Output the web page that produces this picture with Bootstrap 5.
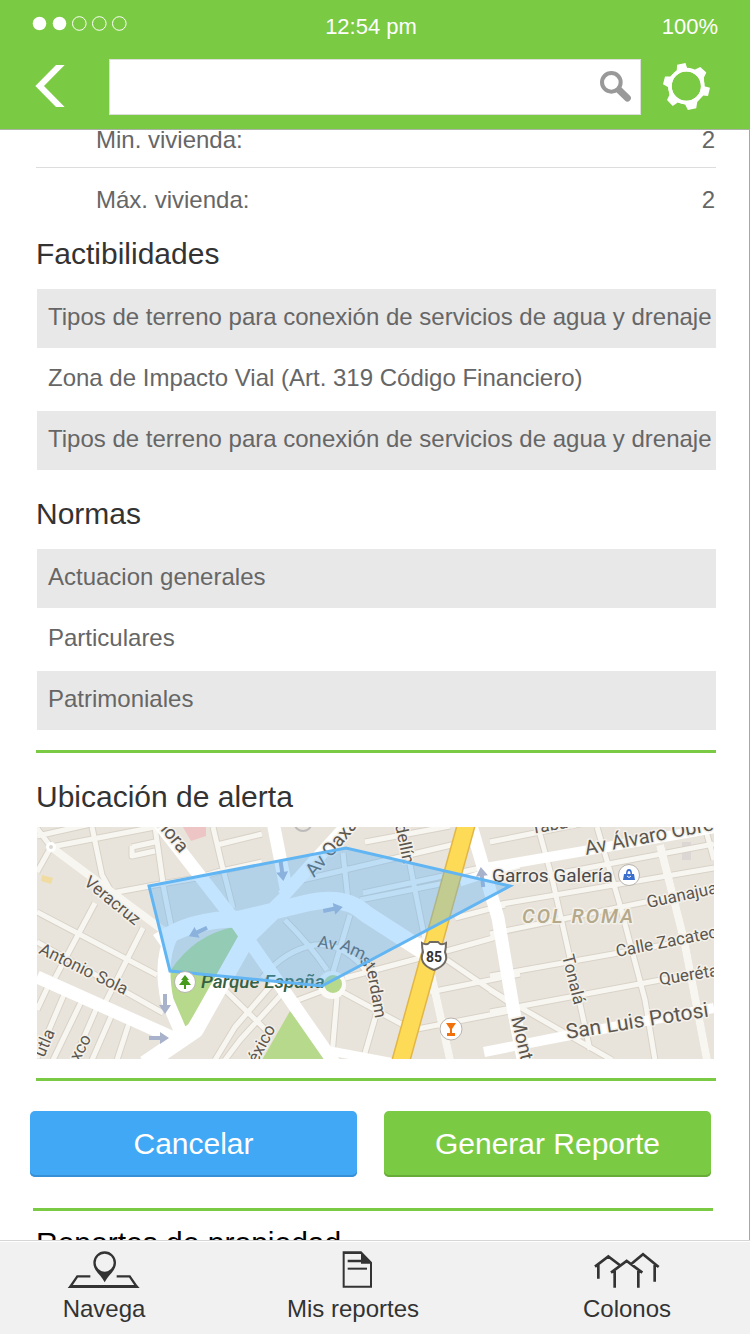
<!DOCTYPE html>
<html lang="es">
<head>
<meta charset="utf-8">
<meta name="viewport" content="width=device-width, initial-scale=1">
<title>Reporte</title>
<link href="https://cdn.jsdelivr.net/npm/bootstrap@5.3.0/dist/css/bootstrap.min.css" rel="stylesheet">
<style>
:root { --brand: #7bca43; }
body { font-family: "Liberation Sans", Arial, sans-serif; font-size: 24px; line-height: 36px; color: #666; background: #fff; }
.app-head { background: var(--brand); border-bottom: 1px solid #a9b3a1; padding: 0 32px 14px 24px; color: #fff; }
.status { font-size: 22px; line-height: 28px; padding: 13px 0 18px; }
.status svg { margin: 3px 0 0 8px; }
.tools { gap: 22px; }
.icon-btn { border: 0; background: none; padding: 0; display: flex; align-items: center; color: #fff; }
.back-btn { width: 63px; padding-left: 11px; }
.gear-btn { width: 55px; }
.search-box .form-control { height: 56px; border: 1px solid #dcdfd9; border-radius: 0; padding: 0 52px 0 12px; font-size: 24px; }
.search-box .icon-btn { position: absolute; right: 10px; top: 12px; }
.content { border-right: 1px solid #a6a6a6; padding: 0 33px 0 36px; min-height: 0; }
.scrolled { margin-top: -22px; }
.datum { padding: 14px 1px 9px 60px; border-bottom: 1px solid #ddd; }
.datum:last-child { border-color: transparent; }
.datum dt { font-weight: 400; }
.section-title { font-size: 30px; line-height: 36px; color: #333; margin: 0; font-weight: 400; }
.rows { display: grid; gap: 2px; margin: 17px 0 0; padding: 0 0 0 1px; list-style: none; }
.rows li { padding: 10px 0 13px 11px; white-space: nowrap; }
.rows li:nth-child(odd) { background: #e8e8e8; }
.rule { border: 0; border-top: 3px solid var(--brand); opacity: 1; margin: 0; }
.map { display: block; width: 100%; padding: 0 2px 0 1px; }
.actions { display: grid; grid-template-columns: 1fr 1fr; gap: 27px; margin: 30px 5px 31px -6px; }
.actions .btn { height: 66px; border: 0; border-radius: 5px; color: #fff; font-size: 30px; line-height: 36px; padding: 0; }
.btn-cancel, .btn-cancel:hover { background: #41a8f5; box-shadow: inset 0 -2px #3590d6; }
.btn-make, .btn-make:hover { background: var(--brand); box-shadow: inset 0 -2px #68ab38; }
.more { margin: 0 3px 0 -3px; }
.app-foot { display: grid; grid-template-columns: 208fr 290fr 252fr; border-top: 1px solid #d6d6d6; box-shadow: inset 0 1px #fff; background: #f1f1f1; padding: 10px 0 4px; }
.app-foot a { color: #333; text-decoration: none; line-height: 42px; }
</style>
</head>
<body>
<div class="d-flex flex-column vh-100 overflow-hidden">
  <header class="app-head flex-shrink-0">
    <div class="status row g-0">
      <div class="col-4 d-flex align-items-start">
        <svg width="95" height="15" viewBox="0 0 95 15" fill="none" stroke="#fff" aria-hidden="true"><g fill="#fff" stroke="none"><circle cx="7.500" cy="7.500" r="6.800"/><circle cx="27.500" cy="7.500" r="6.800"/></g><circle cx="47.300" cy="7.500" r="6.800"/><circle cx="67.300" cy="7.500" r="6.800"/><circle cx="87.300" cy="7.500" r="6.800"/></svg>
      </div>
      <div class="col-4 text-center">12:54 pm</div>
      <div class="col-4 text-end">100%</div>
    </div>
    <div class="tools d-flex">
      <button class="icon-btn back-btn" type="button" aria-label="Volver"><svg width="30" height="42" viewBox="106 198 88 126" fill="#fff" overflow="visible"><path d="M106 258 168 195H194L132 258 194 321H168Z"/></svg></button>
      <form class="search-box position-relative flex-grow-1" role="search">
        <input class="form-control" type="text" aria-label="Buscar">
        <button class="icon-btn" type="button" aria-label="Buscar"><svg width="31" height="31" viewBox="675 212 93 93" fill="none" stroke="#999"><circle cx="709" cy="246" r="28" stroke-width="12"/><path d="M733 270 757 293" stroke-width="21" stroke-linecap="round"/></svg></button>
      </form>
      <button class="icon-btn gear-btn" type="button" aria-label="Ajustes"><svg width="47" height="47" viewBox="864 191 140 140" overflow="visible"><path fill="#fff" fill-rule="evenodd" d="M906 193 931 188 936 204 958 208 975 200 993 216 986 231 987 257 1004 262 998 286 984 285 966 304 963 323 938 328 930 312 908 306 893 316 876 298 883 283 880 260 864 251 870 228 886 228 905 210ZM890 257a43.500 43.500 0 1 0 87 0 43.500 43.500 0 1 0-87 0Z"/><circle cx="933.500" cy="257" r="49" fill="none" stroke="#fff" stroke-width="11"/></svg></button>
    </div>
  </header>

  <main class="content flex-grow-1 overflow-hidden">
    <div class="scrolled">
      <dl class="m-0">
        <div class="datum d-flex justify-content-between"><dt>Min. vivienda:</dt><dd class="m-0">2</dd></div>
        <div class="datum d-flex justify-content-between"><dt>Máx. vivienda:</dt><dd class="m-0">2</dd></div>
      </dl>
      <section style="padding-top:8px">
        <h2 class="section-title">Factibilidades</h2>
        <ul class="rows">
          <li>Tipos de terreno para conexión de servicios de agua y drenaje</li>
          <li>Zona de Impacto Vial (Art. 319 Código Financiero)</li>
          <li>Tipos de terreno para conexión de servicios de agua y drenaje</li>
        </ul>
      </section>
      <section style="padding:26px 0 20px">
        <h2 class="section-title">Normas</h2>
        <ul class="rows">
          <li>Actuacion generales</li>
          <li>Particulares</li>
          <li>Patrimoniales</li>
        </ul>
      </section>
      <hr class="rule">
      <section style="padding:26px 0 19px">
        <h2 class="section-title" style="margin-bottom:12px">Ubicación de alerta</h2>
        <svg class="map" viewBox="37 827 677 232" font-family="Roboto, sans-serif" role="img" aria-label="Mapa de la zona de alerta">
          <defs>
            <g id="streets" fill="none" stroke-linejoin="round">
              <path d="M36 827 51 847 37 872M51 847 155 827M37 836 100 822M92 827 102 875 112 893 155 885 197 878 217 872 262 862M155 827 164 890 173 935M132 847 155 842M132 846V856L155 851M213 827 222 865 233 908M217 845 262 834M37 912 157 975M95 903 55 978M143 928 105 1003M37 942 163 1013M51 980 37 1010M66 990 37 1058M83 998 53 1060M98 1005 74 1060M113 1012 92 1060M130 1020 117 1060M302 880 460 843M343 853 348 900M403 827 412 875 425 940M365 842 450 826M360 900 500 872 520 866M363 893 490 866M285 920Q310 945 327 970M350 915 333 972M262 978Q285 950 315 945 340 942 362 966 379 985 376 1015L363 1060M345 978 450 950 500 936M333 987 407 1027M417 1029 510 1011M337 997 332 1055M290 1003 330 988M225 990 268 1032M290 985 240 1040 225 1060M280 975 235 1027 215 1060M455 918 505 905M430 992 520 974M447 960 520 1010"/>
              <path d="M490 842 600 820M490 906 714 868M490 934 714 888M490 976 714 936M490 1012 714 970M538 827 552 878 570 958 590 1050M597 827 620 905 645 1000 655 1060M705 827 714 860M490 990 612 1060M540 877 714 844"/>
              <path stroke-width="8" d="M51 847 160 928 175 938M660 845 684 940 707 1060M423 937 450 1060"/>
            </g>
          </defs>
          <rect x="37" y="827" width="677" height="232" fill="#e9e4db"/>
          <path d="M180 822h26v14l-15 5Z" fill="#edc5c4"/><path d="M42 875l11 3-2 6-10-3Z" fill="#f0dca0"/><path d="M682 842h9v18h-9Z" fill="#dcd7d4"/>
          <path d="M170 971Q195 934 234 927L240 940 220 975 183 1032 170 1006ZM290 1011 329 1060H262Z" fill="#b7d98c"/>
          <use href="#streets" stroke="#d8d2c8" stroke-width="7"/>
          <use href="#streets" stroke="#f8f6f1" stroke-width="5"/>
          <g fill="none" stroke="#fff" stroke-linejoin="round">
            <path stroke-width="13" d="M158 822 238 925 280 985 335 1064M37 977 178 1040M273 822 287 893M283 896 350 822M172 935Q159 960 167 1000L182 1035M470 822 498 918 513 1007 524 1064"/>
            <path stroke-width="17" d="M158 942Q190 919 240 919L307 903Q345 894 366 914L425 952M145 1064 195 1030 248 936 288 897"/>
            <path stroke-width="10" d="M485 868 590 850 720 827M484 1052 560 1037 714 1008"/>
            <path stroke-width="9" d="M325 1050 400 1064M460 882 520 862"/>
          </g>
          <circle cx="51" cy="847" r="5" fill="#fff"/><circle cx="51" cy="847" r="2" fill="#ddd8d0"/>
          <circle cx="332" cy="985" r="14" fill="#fbfaf6"/><circle cx="333" cy="984" r="9" fill="#b7d98c"/>
          <path d="M295 824a8 7 0 0 0 16 0" fill="none" stroke="#bbb" stroke-width="2"/>
          <path d="M467 822 400 1064" stroke="#e2b645" stroke-width="19"/><path d="M467 822 400 1064" stroke="#fddb57" stroke-width="16"/>
          <g fill="#a9b2cb">
            <path d="M-10-2H1V-6L10 0 1 6V2H-10Z" transform="translate(159 1038)"/>
            <path d="M-10-2H1V-6L10 0 1 6V2H-10Z" transform="translate(165 1004) rotate(90)"/>
            <path d="M-10-2H1V-6L10 0 1 6V2H-10Z" transform="translate(198 932) rotate(155)"/>
            <path d="M-10-2H1V-6L10 0 1 6V2H-10Z" transform="translate(333 909) rotate(-12)"/>
            <path d="M-10-2H1V-6L10 0 1 6V2H-10Z" transform="translate(282 871) rotate(82)"/>
            <path d="M-10-2H1V-6L10 0 1 6V2H-10Z" transform="translate(482 877) rotate(-97)"/>
          </g>
          <g fill="#5c564e" font-size="17" stroke="#f4f1eb" stroke-width="3" paint-order="stroke" stroke-linejoin="round">
            <text transform="translate(156 825) rotate(50)" font-size="19">nora</text>
            <text transform="translate(83 884) rotate(39)">Veracruz</text>
            <text transform="translate(38 953) rotate(26)" font-size="17">Antonio Sola</text>
            <text transform="translate(44 1058) rotate(-67)">utla</text>
            <text transform="translate(79 1062) rotate(-62)">xco</text>
            <text transform="translate(257 1064) rotate(-62)">éxico</text>
            <text transform="translate(314 878) rotate(-50)" font-size="19">Av Oaxaca</text>
            <text transform="translate(395 825) rotate(78)">dellín</text>
            <text transform="translate(317 947) rotate(10)" stroke="none">Av</text>
            <text transform="translate(339 949) rotate(25)" stroke="none">Am</text>
            <text transform="translate(359 961) rotate(52)" stroke="none">st</text>
            <text transform="translate(367 971) rotate(80)">erdam</text>
            <text transform="translate(532 834) rotate(-10)">Tabasco</text>
            <text transform="translate(586 855) rotate(-11)" font-size="20">Av Álvaro Obregón</text>
            <text transform="translate(648 908) rotate(-12)">Guanajuato</text>
            <text transform="translate(617 957) rotate(-11)">Calle Zacatecas</text>
            <text transform="translate(660 985) rotate(-9)">Querétaro</text>
            <text transform="translate(567 1039) rotate(-9)" font-size="21">San Luis Potosi</text>
            <text transform="translate(562 956) rotate(76)">Tonalá</text>
            <text transform="translate(511 1018) rotate(77)" font-size="19">Mont</text>
            <text x="492" y="882" font-size="19" fill="#4a4a4a">Garros Galería</text>
            <text x="522" y="923" font-size="20" font-style="italic" font-weight="500" letter-spacing="2" fill="#b5a98c">COL ROMA</text>
            <text x="201" y="988" font-size="19" font-style="italic" font-weight="500" stroke="none" fill="#356043">Parque España</text>
          </g>
          <path d="M149 886 346 848 510 886 337 978 322 986 170 971Z" fill="#54b2ff" fill-opacity=".35" stroke="#62b5f3" stroke-width="3"/>
          <g stroke="#b8b4ad"><circle cx="185" cy="982" r="10.500" fill="#fff"/><circle cx="451" cy="1029" r="11" fill="#fff"/><circle cx="629" cy="875" r="10.500" fill="#fff"/></g>
          <path d="M185 975l4 5-2 0 4 5h-5v4h-2v-4h-5l4-5h-2Z" fill="#469b1c"/>
          <path d="M446 1023h10l-4 6v4h3v3h-8v-3h3v-4Z" fill="#f0700c"/>
          <path d="M623 880l1-6h2q0-5 3-5t3 5h2l1 6ZM627.500 874h3q0-3-1.500-3t-1.500 3Z" fill="#3b70cf" fill-rule="evenodd"/><path d="M627 876q2 3 4 0" stroke="#fff" fill="none"/>
          <path d="M422 943q5 3 8-1h8q3 4 8 1 0 5-1 9 5 12-11 18-16-6-11-18-1-4-1-9Z" fill="#fff" stroke="#6f6a62" stroke-width="2"/>
          <text x="434" y="962" text-anchor="middle" font-size="14" font-weight="700" fill="#333">85</text>
        </svg>
      </section>
      <hr class="rule">
      <div class="actions">
        <button class="btn btn-cancel" type="button">Cancelar</button>
        <button class="btn btn-make" type="button">Generar Reporte</button>
      </div>
      <section class="more">
        <hr class="rule">
        <h2 class="section-title text-black" style="padding:14px 0 0 3px">Reportes de propiedad</h2>
      </section>
    </div>
  </main>

  <nav class="app-foot flex-shrink-0" aria-label="Principal">
    <a href="#" class="d-flex flex-column align-items-center">
      <svg width="72" height="37" viewBox="2 0 216 111" fill="none" stroke="#333" overflow="visible"><path d="M69 76H30L9 107H208L187 76H148" stroke-width="7"/><path d="M1 111 10 102H208L217 111Z" fill="#333" stroke="none"/><path fill="#333" stroke="none" fill-rule="evenodd" d="M112 94C102 72 78 60 78 36A34 35 0 0 1 146 36C146 60 122 72 112 94ZM85 35a27 27 0 1 0 54 0 27 27 0 1 0-54 0Z"/></svg>
      <span>Navega</span>
    </a>
    <a href="#" class="d-flex flex-column align-items-center">
      <svg class="ms-2" width="30" height="37" viewBox="0 0 90 111" fill="#333"><path fill-rule="evenodd" d="M2 1H58L90 34V110H2ZM8 9V104H84V38H57V34H17V26H57V9Z"/><path d="M17 50H75V56H17Z"/></svg>
      <span>Mis reportes</span>
    </a>
    <a href="#" class="d-flex flex-column align-items-center" style="padding-left:6px">
      <svg width="66" height="37" viewBox="0 0 198 111" fill="none" stroke="#333" stroke-width="8"><path d="M3 47 43 16 77 42M13 42V83M109 41 147 10 194 48M182 42V92M51 65 98 30 145 65M62 60V110M133 60V110"/></svg>
      <span>Colonos</span>
    </a>
  </nav>
</div>
<script src="https://cdn.jsdelivr.net/npm/bootstrap@5.3.0/dist/js/bootstrap.bundle.min.js"></script>
</body>
</html>
